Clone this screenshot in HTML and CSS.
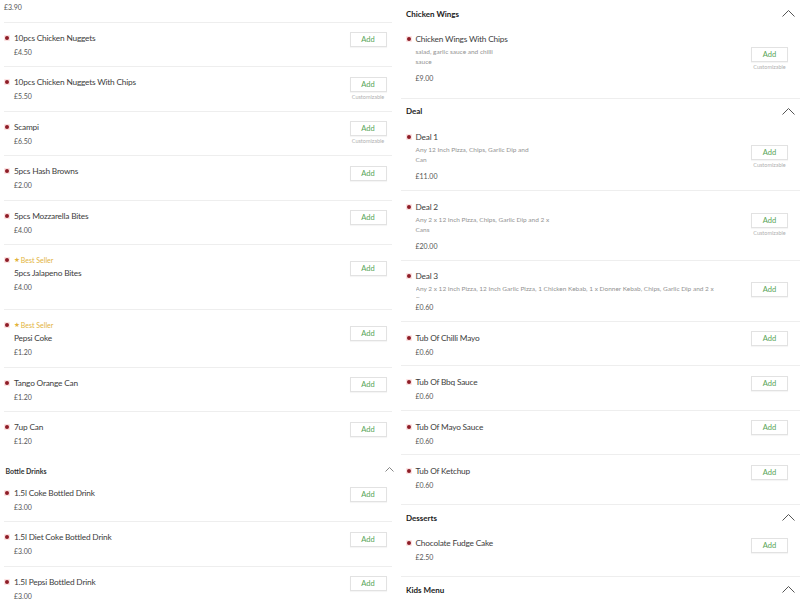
FILE: index.html
```html
<!DOCTYPE html>
<html lang="en">
<head>
  <meta charset="UTF-8">
  <title>Menu</title>
  <link rel="stylesheet" href="styles.css">
</head>
<body>
  <div class="menu">

    <div class="col col-left">
      <div class="section">
        <div class="item item--cut">
          <div class="info"><div class="price">£3.90</div></div>
        </div>
        <div class="item">
          <span class="mark"></span>
          <div class="info"><div class="name">10pcs Chicken Nuggets</div><div class="price">£4.50</div></div>
          <div class="action"><button class="add">Add</button><span class="note"></span></div>
        </div>
        <div class="item">
          <span class="mark"></span>
          <div class="info"><div class="name">10pcs Chicken Nuggets With Chips</div><div class="price">£5.50</div></div>
          <div class="action"><button class="add">Add</button><span class="note">Customizable</span></div>
        </div>
        <div class="item">
          <span class="mark"></span>
          <div class="info"><div class="name">Scampi</div><div class="price">£6.50</div></div>
          <div class="action"><button class="add">Add</button><span class="note">Customizable</span></div>
        </div>
        <div class="item">
          <span class="mark"></span>
          <div class="info"><div class="name">5pcs Hash Browns</div><div class="price">£2.00</div></div>
          <div class="action"><button class="add">Add</button><span class="note"></span></div>
        </div>
        <div class="item">
          <span class="mark"></span>
          <div class="info"><div class="name">5pcs Mozzarella Bites</div><div class="price">£4.00</div></div>
          <div class="action"><button class="add">Add</button><span class="note"></span></div>
        </div>
        <div class="item item--tall">
          <span class="mark"></span>
          <div class="info">
            <div class="badge"><span class="star">★</span>Best Seller</div>
            <div class="name">5pcs Jalapeno Bites</div>
            <div class="price">£4.00</div>
          </div>
          <div class="action"><button class="add">Add</button><span class="note"></span></div>
        </div>
        <div class="item">
          <span class="mark"></span>
          <div class="info">
            <div class="badge"><span class="star">★</span>Best Seller</div>
            <div class="name">Pepsi Coke</div>
            <div class="price">£1.20</div>
          </div>
          <div class="action"><button class="add">Add</button><span class="note"></span></div>
        </div>
        <div class="item">
          <span class="mark"></span>
          <div class="info"><div class="name">Tango Orange Can</div><div class="price">£1.20</div></div>
          <div class="action"><button class="add">Add</button><span class="note"></span></div>
        </div>
        <div class="item">
          <span class="mark"></span>
          <div class="info"><div class="name">7up Can</div><div class="price">£1.20</div></div>
          <div class="action"><button class="add">Add</button><span class="note"></span></div>
        </div>
      </div>

      <div class="section">
        <div class="head">
          <span>Bottle Drinks</span>
          <svg class="chev" width="9" height="5" viewBox="0 0 9 5"><polyline points="0.5,4.5 4.5,0.5 8.5,4.5" fill="none" stroke="#777" stroke-width="0.9"/></svg>
        </div>
        <div class="item">
          <span class="mark"></span>
          <div class="info"><div class="name">1.5l Coke Bottled Drink</div><div class="price">£3.00</div></div>
          <div class="action"><button class="add">Add</button><span class="note"></span></div>
        </div>
        <div class="item">
          <span class="mark"></span>
          <div class="info"><div class="name">1.5l Diet Coke Bottled Drink</div><div class="price">£3.00</div></div>
          <div class="action"><button class="add">Add</button><span class="note"></span></div>
        </div>
        <div class="item">
          <span class="mark"></span>
          <div class="info"><div class="name">1.5l Pepsi Bottled Drink</div><div class="price">£3.00</div></div>
          <div class="action"><button class="add">Add</button><span class="note"></span></div>
        </div>
      </div>
    </div>

    <div class="col col-right">
      <div class="section">
        <div class="head">
          <span>Chicken Wings</span>
          <svg class="chev" width="13" height="7" viewBox="0 0 13 7"><polyline points="0.5,6.5 6.5,0.5 12.5,6.5" fill="none" stroke="#555" stroke-width="1"/></svg>
        </div>
        <div class="item">
          <span class="mark"></span>
          <div class="info">
            <div class="name">Chicken Wings With Chips</div>
            <div class="desc">salad, garlic sauce and chilli<br>sauce</div>
            <div class="price">£9.00</div>
          </div>
          <div class="action"><button class="add">Add</button><span class="note">Customizable</span></div>
        </div>
      </div>

      <div class="section">
        <div class="head">
          <span>Deal</span>
          <svg class="chev" width="13" height="7" viewBox="0 0 13 7"><polyline points="0.5,6.5 6.5,0.5 12.5,6.5" fill="none" stroke="#555" stroke-width="1"/></svg>
        </div>
        <div class="item">
          <span class="mark"></span>
          <div class="info">
            <div class="name">Deal 1</div>
            <div class="desc">Any 12 Inch Pizza, Chips, Garlic Dip and<br>Can</div>
            <div class="price">£11.00</div>
          </div>
          <div class="action"><button class="add">Add</button><span class="note">Customizable</span></div>
        </div>
        <div class="item">
          <span class="mark"></span>
          <div class="info">
            <div class="name">Deal 2</div>
            <div class="desc">Any 2 x 12 Inch Pizza, Chips, Garlic Dip and 2 x<br>Cans</div>
            <div class="price">£20.00</div>
          </div>
          <div class="action"><button class="add">Add</button><span class="note">Customizable</span></div>
        </div>
        <div class="item item--clip">
          <span class="mark"></span>
          <div class="info">
            <div class="name">Deal 3</div>
            <div class="desc">Any 2 x 12 Inch Pizza, 12 Inch Garlic Pizza, 1 Chicken Kebab, 1 x Donner Kebab, Chips, Garlic Dip and 2 x<br>Cans</div>
            <div class="price">£0.60</div>
          </div>
          <div class="action"><button class="add">Add</button><span class="note"></span></div>
        </div>
        <div class="item">
          <span class="mark"></span>
          <div class="info"><div class="name">Tub Of Chilli Mayo</div><div class="price">£0.60</div></div>
          <div class="action"><button class="add">Add</button><span class="note"></span></div>
        </div>
        <div class="item">
          <span class="mark"></span>
          <div class="info"><div class="name">Tub Of Bbq Sauce</div><div class="price">£0.60</div></div>
          <div class="action"><button class="add">Add</button><span class="note"></span></div>
        </div>
        <div class="item">
          <span class="mark"></span>
          <div class="info"><div class="name">Tub Of Mayo Sauce</div><div class="price">£0.60</div></div>
          <div class="action"><button class="add">Add</button><span class="note"></span></div>
        </div>
        <div class="item">
          <span class="mark"></span>
          <div class="info"><div class="name">Tub Of Ketchup</div><div class="price">£0.60</div></div>
          <div class="action"><button class="add">Add</button><span class="note"></span></div>
        </div>
      </div>

      <div class="section">
        <div class="head">
          <span>Desserts</span>
          <svg class="chev" width="13" height="7" viewBox="0 0 13 7"><polyline points="0.5,6.5 6.5,0.5 12.5,6.5" fill="none" stroke="#555" stroke-width="1"/></svg>
        </div>
        <div class="item">
          <span class="mark"></span>
          <div class="info"><div class="name">Chocolate Fudge Cake</div><div class="price">£2.50</div></div>
          <div class="action"><button class="add">Add</button><span class="note"></span></div>
        </div>
      </div>

      <div class="section">
        <div class="head">
          <span>Kids Menu</span>
          <svg class="chev" width="13" height="7" viewBox="0 0 13 7"><polyline points="0.5,6.5 6.5,0.5 12.5,6.5" fill="none" stroke="#555" stroke-width="1"/></svg>
        </div>
      </div>
    </div>

  </div>
</body>
</html>
```

FILE: styles.css
```css
html, body {
  overflow: hidden;
}

body {
  margin: 0;
  font-family: Lato, "Open Sans", sans-serif;
  background: #ffffff;
  color: #3b3b3b;
}

.menu {
  display: grid;
  grid-template-columns: 400px 400px;
  height: 600px;
  overflow: hidden;
}

.col-left {
  padding: 0 8px 0 4px;
}

.col-right {
  padding: 1px 0 0 1px;
}

/* rows */
.item {
  display: flex;
  align-items: flex-start;
  border-bottom: 1px solid #eeeeee;
}

.section .item:last-child {
  border-bottom: none;
}

.info {
  flex: 1;
  padding: 9px 0 8.5px;
}

.mark {
  width: 6px;
  height: 6px;
  margin: 12px 4px 0 0;
  background: #fbe2e2;
  border-radius: 1px;
  display: flex;
  align-items: center;
  justify-content: center;
  flex-shrink: 0;
}

.mark::after {
  content: "";
  width: 4px;
  height: 4px;
  border-radius: 50%;
  background: #8e1c26;
}

.name {
  font-size: 8.3px;
  letter-spacing: -0.2px;
  line-height: 12px;
  color: #3d3d3d;
  white-space: nowrap;
}

.price {
  margin-top: 2px;
  font-size: 7px;
  line-height: 12px;
  color: #555555;
}

.desc {
  margin-top: 2px;
  font-size: 6.5px;
  line-height: 10px;
  color: #939393;
  white-space: nowrap;
}

.desc + .price {
  margin-top: 5px;
}

.badge {
  display: flex;
  align-items: center;
  height: 12px;
  margin-bottom: 1px;
  font-size: 7px;
  color: #e2b33c;
}

.star {
  font-family: "DejaVu Sans", sans-serif;
  font-size: 6.5px;
  margin-right: 1px;
}

.action {
  align-self: center;
  display: flex;
  flex-direction: column;
  align-items: center;
  width: 37px;
  margin-right: 5.5px;
}

.add {
  width: 37px;
  height: 15px;
  padding: 0;
  border: 1px solid #e2e2e2;
  background: #ffffff;
  box-shadow: 0 1px 1px rgba(0, 0, 0, 0.04);
  color: #56a456;
  font-family: Lato, sans-serif;
  font-size: 7.5px;
}

.note {
  display: block;
  height: 8px;
  margin-top: 1px;
  line-height: 8px;
  font-size: 5.5px;
  color: #b0b0b0;
  white-space: nowrap;
}

.item--cut .info {
  padding-top: 1px;
}

.item--cut .price {
  margin-top: 0;
}

.item--tall .info {
  padding-bottom: 16px;
}

.item--tall .action {
  margin-bottom: 8px;
}

/* headers */
.head {
  display: flex;
  justify-content: space-between;
  align-items: center;
  font-weight: 700;
}

.col-left .head {
  padding: 9.5px 0 0.5px 1.5px;
  line-height: 12px;
  font-size: 7px;
  color: #333333;
}

.col-left .head .chev {
  margin-right: -2px;
  margin-top: -3px;
}

/* right column */
.col-right .section {
  border-bottom: 1px solid #eeeeee;
  padding-bottom: 5.5px;
}

.col-right .section:last-child {
  border-bottom: none;
}

.col-right .head {
  height: 25px;
  padding: 0 5px;
  font-size: 8px;
  color: #222222;
}

.col-right .item {
  padding-left: 5px;
}

.col-right .mark {
  margin-right: 3.5px;
  margin-top: 13px;
}

.col-right .info {
  padding: 10px 0 7.5px;
}

.col-right .head + .item .info {
  padding-top: 7px;
}

.col-right .head + .item .mark {
  margin-top: 10px;
}

.col-right .desc + .price {
  margin-top: 5px;
}

.col-right .item .desc ~ .price {
  margin-bottom: 0.5px;
}

.col-right .action {
  margin-right: 12px;
}

.item--clip .info {
  padding: 9px 0 7.5px;
}

.col-right .item--clip .mark {
  margin-top: 12px;
}

.item--clip .desc {
  height: 14px;
  overflow: hidden;
}

.item--clip .desc + .price {
  margin-top: 3px;
}

.item--clip .action {
  margin-top: 6px;
}
```
